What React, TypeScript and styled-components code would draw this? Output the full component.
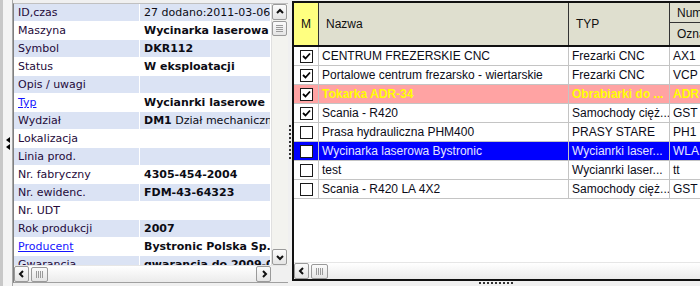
import styled, { createGlobalStyle } from "styled-components";

const GlobalStyle = createGlobalStyle`
  html, body {
    margin: 0;
    padding: 0;
    background: #f0f0f0;
  }
`;

const Screen = styled.div`
  width: 700px;
  height: 286px;
  display: flex;
  overflow: hidden;
  background: #f0f0f0;
`;

const SideStrip = styled.div`
  width: 13px;
  flex-shrink: 0;
  display: flex;
  flex-direction: column;
  align-items: center;
  justify-content: center;
  gap: 1px;
  background: #f4f4f4;
  border-left: 3px solid #c8c8c8;
  border-right: 1px solid #a8a8a8;
  box-sizing: border-box;
`;

const Arrow = styled.div`
  width: 0;
  height: 0;
  border-top: 3px solid transparent;
  border-bottom: 3px solid transparent;
  border-right: 4px solid #000;
`;

const LeftPanel = styled.div`
  margin-top: 3px;
  width: 274px;
  height: 278px;
  flex-shrink: 0;
  display: flex;
  flex-direction: column;
  border-left: 1px solid #808080;
  border-top: 1px solid #c0c0c0;
  border-bottom: 1px solid #a0a0a0;
  background: #fff;
`;

const LeftBody = styled.div`
  flex: 1;
  display: flex;
  min-height: 0;
`;

const PropList = styled.div`
  flex: 1;
  min-width: 0;
  overflow: hidden;
  font-family: "DejaVu Sans", Verdana, sans-serif;
  font-size: 11px;
`;

const PropRow = styled.div<{ $alt: boolean }>`
  display: grid;
  grid-template-columns: 125px 130px;
  column-gap: 1px;
  height: 18px;
  line-height: 17px;
  div {
    background: ${(p) => (p.$alt ? "#dbe3f4" : "#fff")};
    height: 17px;
    padding-left: 4px;
    white-space: nowrap;
    overflow: hidden;
  }
`;

const Label = styled.div<{ $link?: boolean }>`
  color: ${(p) => (p.$link ? "#1515ff" : "#240a3a")};
  text-decoration: ${(p) => (p.$link ? "underline" : "none")};
`;

const Value = styled.div<{ $bold?: boolean }>`
  color: #0c0c14;
  font-weight: ${(p) => (p.$bold ? "bold" : "normal")};
  b {
    font-weight: bold;
  }
`;

const VScroll = styled.div`
  width: 16px;
  flex-shrink: 0;
  display: flex;
  flex-direction: column;
  background: #f3f3ef;
  border-left: 1px solid #e0e0e0;
`;

const ScrollButton = styled.div`
  width: 15px;
  height: 16px;
  box-sizing: border-box;
  border: 1px solid #9a9a9a;
  border-radius: 2px;
  background: linear-gradient(#fbfbfb, #e4e4e4);
  display: flex;
  align-items: center;
  justify-content: center;
  color: #111;
  flex-shrink: 0;
`;

const Thumb = styled(ScrollButton)<{ $horizontal?: boolean }>`
  width: ${(p) => (p.$horizontal ? "17px" : "15px")};
  height: 15px;
  margin: ${(p) => (p.$horizontal ? "0 0 0 2px" : "1px 0 0")};
`;

const Filler = styled.div`
  flex: 1;
`;

const HScroll = styled.div`
  height: 16px;
  flex-shrink: 0;
  display: flex;
  align-items: center;
  background: linear-gradient(#ffffff, #ebebeb);
  border-top: 1px solid #e6e6e6;
`;

const Corner = styled.div`
  width: 17px;
  height: 16px;
  background: #f0f0f0;
`;

const Splitter = styled.div<{ $horizontal?: boolean }>`
  display: flex;
  align-items: center;
  justify-content: center;
  flex-shrink: 0;
  background: #f0f0f0;
  ${(p) => (p.$horizontal ? "height: 4px;" : "width: 4px;")}
`;

const Grip = styled.div<{ $horizontal?: boolean }>`
  ${(p) =>
    p.$horizontal
      ? `width: 34px; height: 2px; background: repeating-linear-gradient(90deg, #333 0 2px, transparent 2px 4px);`
      : `width: 2px; height: 36px; background: repeating-linear-gradient(#333 0 2px, transparent 2px 4px);`}
`;

const RightColumn = styled.div`
  flex: 1;
  min-width: 0;
  display: flex;
  flex-direction: column;
`;

const RightPanel = styled.div`
  margin-top: 1px;
  height: 280px;
  display: flex;
  flex-direction: column;
  border-left: 2px solid #111;
  border-top: 2px solid #111;
  border-bottom: 2px solid #111;
  background: #fff;
  font-family: "Liberation Sans", Arial, sans-serif;
  font-size: 12px;
  box-sizing: border-box;
  overflow: hidden;
`;

const Grid = styled.div`
  flex: 1;
  overflow: hidden;
`;

const cols = "25px 250px 101px 120px";

const HeaderRow = styled.div`
  display: grid;
  grid-template-columns: ${cols};
  height: 42px;
  border-bottom: 2px solid #111;
  background: #dfdfcf;
  color: #111;
`;

const HeadCell = styled.div<{ $yellow?: boolean; $center?: boolean }>`
  display: flex;
  align-items: center;
  justify-content: ${(p) => (p.$center ? "center" : "flex-start")};
  padding-left: ${(p) => (p.$center ? "0" : "7px")};
  border-right: 1px solid #333;
  background: ${(p) => (p.$yellow ? "#ffff80" : "transparent")};
  white-space: nowrap;
  overflow: hidden;
`;

const SplitHead = styled.div`
  display: grid;
  grid-template-rows: 20px 22px;
  div {
    padding-left: 7px;
    display: flex;
    align-items: center;
    white-space: nowrap;
  }
  div:first-child {
    border-bottom: 1px solid #333;
  }
`;

type Tone = "plain" | "alert" | "selected";

const BodyRow = styled.div<{ $tone: Tone }>`
  display: grid;
  grid-template-columns: ${cols};
  height: 19px;
  box-sizing: border-box;
  border-bottom: 1px solid #c4c4c4;
  background: ${(p) =>
    p.$tone === "alert" ? "#ffa3a3" : p.$tone === "selected" ? "#0000ff" : "#fff"};
  color: ${(p) =>
    p.$tone === "alert" ? "#ffff00" : p.$tone === "selected" ? "#e6e6ff" : "#0c0c18"};
  font-weight: ${(p) => (p.$tone === "alert" ? "bold" : "normal")};
`;

const Cell = styled.div`
  display: flex;
  align-items: center;
  padding-left: 3px;
  border-right: 1px solid #c4c4c4;
  white-space: nowrap;
  overflow: hidden;
`;

const CheckCell = styled(Cell)`
  justify-content: center;
  padding-left: 1px;
`;

const Box = styled.span`
  width: 13px;
  height: 13px;
  box-sizing: border-box;
  border: 1px solid #1a1a1a;
  background: #fff;
  display: flex;
  align-items: center;
  justify-content: center;
`;

const Chevron = ({ dir }: { dir: "up" | "down" | "left" | "right" }) => {
  const d = {
    up: "M3 7 L6 4 L9 7",
    down: "M3 5 L6 8 L9 5",
    left: "M7 3 L4 6 L7 9",
    right: "M5 3 L8 6 L5 9",
  }[dir];
  return (
    <svg width="12" height="12" viewBox="0 0 12 12">
      <path d={d} fill="none" stroke="#111" strokeWidth="2" />
    </svg>
  );
};

const GripLines = ({ horizontal }: { horizontal?: boolean }) => (
  <svg width="9" height="9" viewBox="0 0 9 9">
    {[1, 3, 5, 7].map((v) =>
      horizontal ? (
        <line key={v} x1={v + 0.5} y1="1" x2={v + 0.5} y2="8" stroke="#9a9a9a" />
      ) : (
        <line key={v} x1="1" y1={v + 0.5} x2="8" y2={v + 0.5} stroke="#9a9a9a" />
      )
    )}
  </svg>
);

const Check = ({ on }: { on: boolean }) => (
  <Box>
    {on && (
      <svg width="9" height="9" viewBox="0 0 9 9">
        <path d="M1 4 L3.5 6.5 L8 1.5" fill="none" stroke="#000" strokeWidth="1.8" />
      </svg>
    )}
  </Box>
);

const props: { label: string; link?: boolean; value: React.ReactNode; bold?: boolean }[] = [
  { label: "ID,czas", value: "27 dodano:2011-03-06" },
  { label: "Maszyna", value: "Wycinarka laserowa Bystronic", bold: true },
  { label: "Symbol", value: "DKR112", bold: true },
  { label: "Status", value: "W eksploatacji", bold: true },
  { label: "Opis / uwagi", value: "" },
  { label: "Typ", link: true, value: "Wycianrki laserowe", bold: true },
  {
    label: "Wydział",
    value: (
      <>
        <b>DM1</b> Dział mechaniczny
      </>
    ),
  },
  { label: "Lokalizacja", value: "" },
  { label: "Linia prod.", value: "" },
  { label: "Nr. fabryczny", value: "4305-454-2004", bold: true },
  { label: "Nr. ewidenc.", value: "FDM-43-64323", bold: true },
  { label: "Nr. UDT", value: "" },
  { label: "Rok produkcji", value: "2007", bold: true },
  { label: "Producent", link: true, value: "Bystronic Polska Sp. z o.o.", bold: true },
  { label: "Gwarancja", value: "gwarancja do 2009-07-01", bold: true },
];

const machines: { on: boolean; name: string; type: string; code: string; tone: Tone }[] = [
  { on: true, name: "CENTRUM FREZERSKIE CNC", type: "Frezarki CNC", code: "AX1", tone: "plain" },
  { on: true, name: "Portalowe centrum frezarsko - wiertarskie", type: "Frezarki CNC", code: "VCP", tone: "plain" },
  { on: true, name: "Tokarka ADR-34", type: "Obrabiarki do ...", code: "ADR-34", tone: "alert" },
  { on: true, name: "Scania - R420", type: "Samochody cięż...", code: "GST", tone: "plain" },
  { on: false, name: "Prasa hydrauliczna PHM400", type: "PRASY STARE", code: "PH1", tone: "plain" },
  { on: false, name: "Wycinarka laserowa Bystronic", type: "Wycianrki laser...", code: "WLA1", tone: "selected" },
  { on: false, name: "test", type: "Wycianrki laser...", code: "tt", tone: "plain" },
  { on: false, name: "Scania - R420 LA 4X2", type: "Samochody cięż...", code: "GST", tone: "plain" },
];

function App() {
  return (
    <Screen>
      <GlobalStyle />
      <SideStrip>
        <Arrow />
        <Arrow />
      </SideStrip>

      <LeftPanel>
        <LeftBody>
          <PropList>
            {props.map((p, i) => (
              <PropRow key={p.label} $alt={i % 2 === 0}>
                <Label $link={p.link}>{p.label}</Label>
                <Value $bold={p.bold}>{p.value}</Value>
              </PropRow>
            ))}
          </PropList>
          <VScroll>
            <ScrollButton>
              <Chevron dir="up" />
            </ScrollButton>
            <Thumb>
              <GripLines />
            </Thumb>
            <Filler />
            <ScrollButton>
              <Chevron dir="down" />
            </ScrollButton>
          </VScroll>
        </LeftBody>
        <HScroll>
          <ScrollButton>
            <Chevron dir="left" />
          </ScrollButton>
          <Thumb $horizontal>
            <GripLines horizontal />
          </Thumb>
          <Filler />
          <ScrollButton>
            <Chevron dir="right" />
          </ScrollButton>
          <Corner />
        </HScroll>
      </LeftPanel>

      <Splitter>
        <Grip />
      </Splitter>

      <RightColumn>
        <RightPanel>
          <Grid>
            <HeaderRow>
              <HeadCell $yellow $center>
                M
              </HeadCell>
              <HeadCell>Nazwa</HeadCell>
              <HeadCell>TYP</HeadCell>
              <SplitHead>
                <div>Numery</div>
                <div>Oznaczenie</div>
              </SplitHead>
            </HeaderRow>
            {machines.map((m) => (
              <BodyRow key={m.name} $tone={m.tone}>
                <CheckCell>
                  <Check on={m.on} />
                </CheckCell>
                <Cell>{m.name}</Cell>
                <Cell>{m.type}</Cell>
                <Cell>{m.code}</Cell>
              </BodyRow>
            ))}
          </Grid>
          <HScroll>
            <ScrollButton>
              <Chevron dir="left" />
            </ScrollButton>
            <Thumb $horizontal>
              <GripLines horizontal />
            </Thumb>
            <Filler />
          </HScroll>
        </RightPanel>
        <Splitter $horizontal>
          <Grip $horizontal />
        </Splitter>
      </RightColumn>
    </Screen>
  );
}

export default App;
